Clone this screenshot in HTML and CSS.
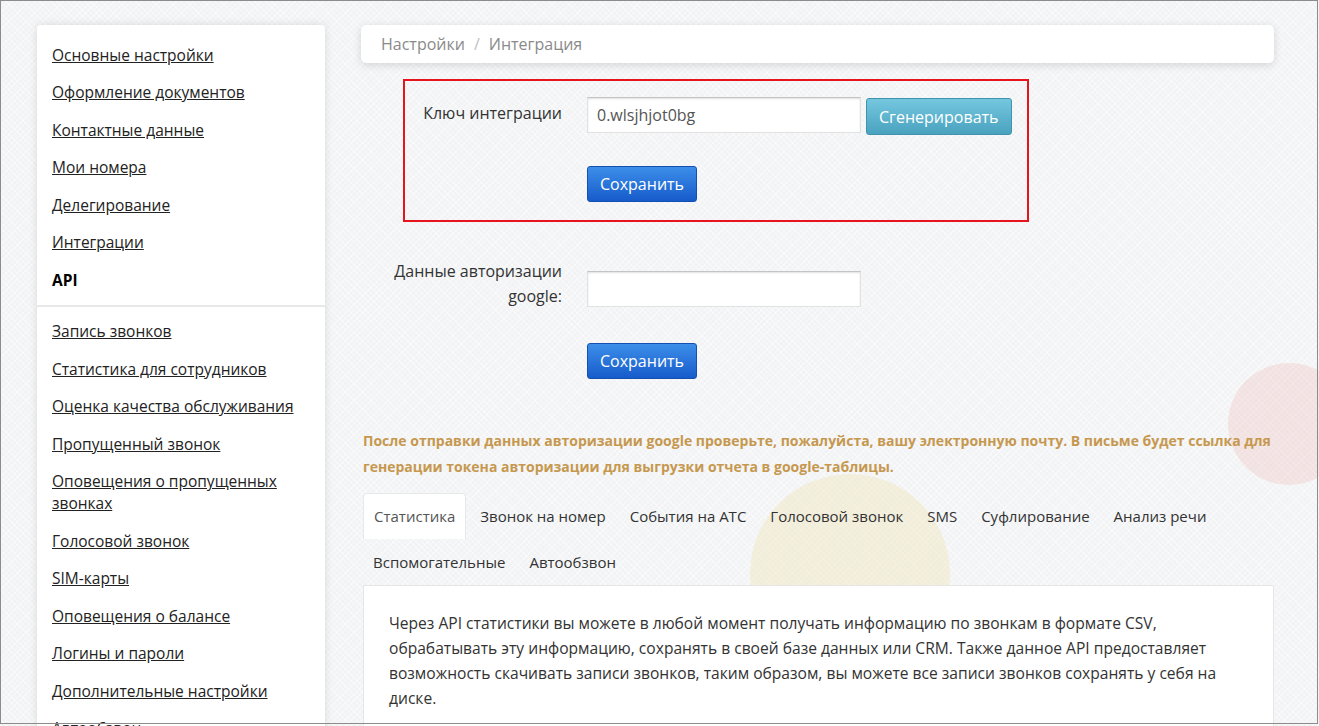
FILE: index.html
```html
<!doctype html>
<html lang="ru">
  <head>
    <meta charset="UTF-8" />
    <meta name="viewport" content="width=device-width, initial-scale=1.0" />
    <title>Настройки — Интеграция</title>
    <link rel="stylesheet" href="styles.css">
  </head>
  <body>
    <div class="frame"></div>

    <div class="page">
      <!-- decorative blobs -->
      <span class="blob blob-pink"></span>
      <span class="blob blob-yellow"></span>

      <!-- Sidebar -->
      <aside class="sidebar">
        <ul class="side-group">
          <li><a href="#">Основные настройки</a></li>
          <li><a href="#">Оформление документов</a></li>
          <li><a href="#">Контактные данные</a></li>
          <li><a href="#">Мои номера</a></li>
          <li><a href="#">Делегирование</a></li>
          <li><a href="#">Интеграции</a></li>
          <li><span class="current">API</span></li>
        </ul>
        <ul class="side-group">
          <li><a href="#">Запись звонков</a></li>
          <li><a href="#">Статистика для сотрудников</a></li>
          <li><a href="#">Оценка качества обслуживания</a></li>
          <li><a href="#">Пропущенный звонок</a></li>
          <li><a href="#">Оповещения о пропущенных звонках</a></li>
          <li><a href="#">Голосовой звонок</a></li>
          <li><a href="#">SIM-карты</a></li>
          <li><a href="#">Оповещения о балансе</a></li>
          <li><a href="#">Логины и пароли</a></li>
          <li><a href="#">Дополнительные настройки</a></li>
          <li><a href="#">Автообзвон</a></li>
        </ul>
      </aside>

      <!-- Main Content -->
      <main class="content">
        <div class="breadcrumb">
          <a href="#">Настройки</a>
          <span class="sep">/</span>
          <span>Интеграция</span>
        </div>

        <div class="highlight">
          <div class="form-row">
            <label class="form-label" for="api-key">Ключ интеграции</label>
            <input class="form-input" id="api-key" type="text" value="0.wlsjhjot0bg" />
            <button class="btn btn-info">Сгенерировать</button>
          </div>
          <div class="form-actions">
            <button class="btn btn-primary">Сохранить</button>
          </div>
        </div>

        <div class="form-row form-google">
          <label class="form-label" for="google-auth">Данные авторизации google:</label>
          <input class="form-input" id="google-auth" type="text" />
        </div>
        <div class="form-actions form-actions-wide">
          <button class="btn btn-primary">Сохранить</button>
        </div>

        <p class="notice">
          После отправки данных авторизации google проверьте, пожалуйста, вашу электронную почту. В письме будет ссылка для генерации токена авторизации для выгрузки отчета в google-таблицы.
        </p>

        <ul class="tabs">
          <li class="active">Статистика</li>
          <li>Звонок на номер</li>
          <li>События на АТС</li>
          <li>Голосовой звонок</li>
          <li>SMS</li>
          <li>Суфлирование</li>
          <li>Анализ речи</li>
          <li>Вспомогательные</li>
          <li>Автообзвон</li>
        </ul>

        <div class="tab-panel">
          <p>
            Через API статистики вы можете в любой момент получать информацию по звонкам в формате CSV, обрабатывать эту информацию, сохранять в своей базе данных или CRM. Также данное API предоставляет возможность скачивать записи звонков, таким образом, вы можете все записи звонков сохранять у себя на диске.
          </p>
        </div>
      </main>
    </div>
  </body>
</html>
```

FILE: styles.css
```css
/* General */
body {
  margin: 0;
  height: 726px;
  overflow: hidden;
  font-family: "Open Sans", "Noto Sans", sans-serif;
  font-size: 16px;
  color: #333;
  background-color: #f2f3f5;
  background-image:
    repeating-linear-gradient(45deg, rgba(255, 255, 255, 0.45) 0 1px, transparent 1px 4px),
    repeating-linear-gradient(-45deg, rgba(255, 255, 255, 0.45) 0 1px, transparent 1px 4px);
}

.frame {
  position: fixed;
  top: 0;
  left: 0;
  width: 1318px;
  height: 724px;
  box-sizing: border-box;
  border: 1px solid #8c8c8c;
  pointer-events: none;
  z-index: 10;
}

.page {
  position: relative;
  display: flex;
  gap: 36px;
  padding: 25px 45px 0 37px;
}

.blob {
  position: absolute;
  border-radius: 50%;
  z-index: 0;
}

.blob-pink {
  left: 1228px;
  top: 363px;
  width: 122px;
  height: 122px;
  background-color: rgba(240, 196, 192, 0.35);
}

.blob-yellow {
  left: 750px;
  top: 474px;
  width: 200px;
  height: 200px;
  background-color: rgba(240, 228, 180, 0.4);
}

/* Sidebar */
.sidebar {
  width: 288px;
  flex: none;
  background-color: #fff;
  border-radius: 4px 4px 0 0;
  box-shadow: 0 0 8px rgba(0, 0, 0, 0.12);
  position: relative;
  z-index: 1;
  font-size: 15.5px;
}

.side-group {
  list-style: none;
  margin: 0;
  padding: 11px 15px 6px;
}

.side-group + .side-group {
  border-top: 2px solid #e8e8e8;
  padding-top: 6px;
}

.side-group li {
  padding: 7.75px 0;
  line-height: 22px;
}

.side-group a {
  color: #222;
  text-decoration: underline;
}

.side-group .current {
  font-weight: bold;
  color: #000;
}

/* Main */
.content {
  flex: 1;
  min-width: 0;
  position: relative;
  z-index: 1;
}

.breadcrumb {
  height: 38px;
  display: flex;
  align-items: center;
  padding: 0 20px;
  background-color: #fff;
  border-radius: 5px;
  box-shadow: 0 2px 8px rgba(0, 0, 0, 0.14);
  color: #8a8a8a;
}

.breadcrumb a {
  color: #8a8a8a;
  text-decoration: none;
}

.breadcrumb .sep {
  margin: 0 9px;
  color: #c0c0c0;
}

.highlight {
  margin: 16px 0 0 42px;
  width: 626px;
  box-sizing: border-box;
  border: 2px solid #e5141f;
  padding: 16px 0 18px;
}

.form-row {
  display: flex;
  align-items: flex-start;
}

.form-label {
  width: 157px;
  flex: none;
  margin-right: 25px;
  padding-top: 5px;
  text-align: right;
  line-height: 22px;
  color: #333;
}

.form-input {
  width: 274px;
  height: 36px;
  box-sizing: border-box;
  padding: 0 9px;
  border: 1px solid #e2e2e2;
  border-top-color: #c4c4c4;
  box-shadow: inset 0 1px 2px rgba(0, 0, 0, 0.12);
  background-color: #fff;
  font: inherit;
  color: #555;
}

.btn {
  height: 36px;
  padding: 0 12px;
  border-radius: 3px;
  font: inherit;
  color: #fff;
  cursor: pointer;
}

.btn-info {
  height: 37px;
  margin: 1px 0 0 5px;
  background: linear-gradient(#74c7df, #4aa2bf);
  border: 1px solid #3f93ad;
}

.btn-primary {
  background: linear-gradient(#3c8ee9, #175bcb);
  border: 1px solid #1550b0;
}

.form-actions {
  margin-top: 31px;
  padding-left: 182px;
}

.form-google {
  margin-top: 37px;
}

.form-google .form-label {
  width: 201px;
  padding-top: 0;
  line-height: 25px;
}

.form-google .form-input {
  margin-top: 12px;
}

.form-actions-wide {
  margin-top: 34px;
  padding-left: 226px;
}

/* Notice */
.notice {
  margin: 49px 0 0 2px;
  font-size: 14px;
  font-weight: bold;
  line-height: 26px;
  color: #c6984f;
}

/* Tabs */
.tabs {
  display: flex;
  flex-wrap: wrap;
  list-style: none;
  margin: 13px 0 0 2px;
  padding: 0;
  font-size: 15px;
}

.tabs li {
  height: 46px;
  line-height: 46px;
  padding: 0 10px;
  margin-right: 4px;
  box-sizing: border-box;
  color: #333;
  cursor: pointer;
}

.tabs li.active {
  background-color: #fff;
  border: 1px solid #e8e8e8;
  border-bottom: none;
  border-radius: 4px 4px 0 0;
  line-height: 44px;
  color: #555;
}

.tab-panel {
  margin-left: 2px;
  padding: 25px 32px 25px 25px;
  background-color: #fff;
  border: 1px solid #e6e6e6;
  font-size: 15.6px;
}

.tab-panel p {
  margin: 0;
  line-height: 25px;
}
```
